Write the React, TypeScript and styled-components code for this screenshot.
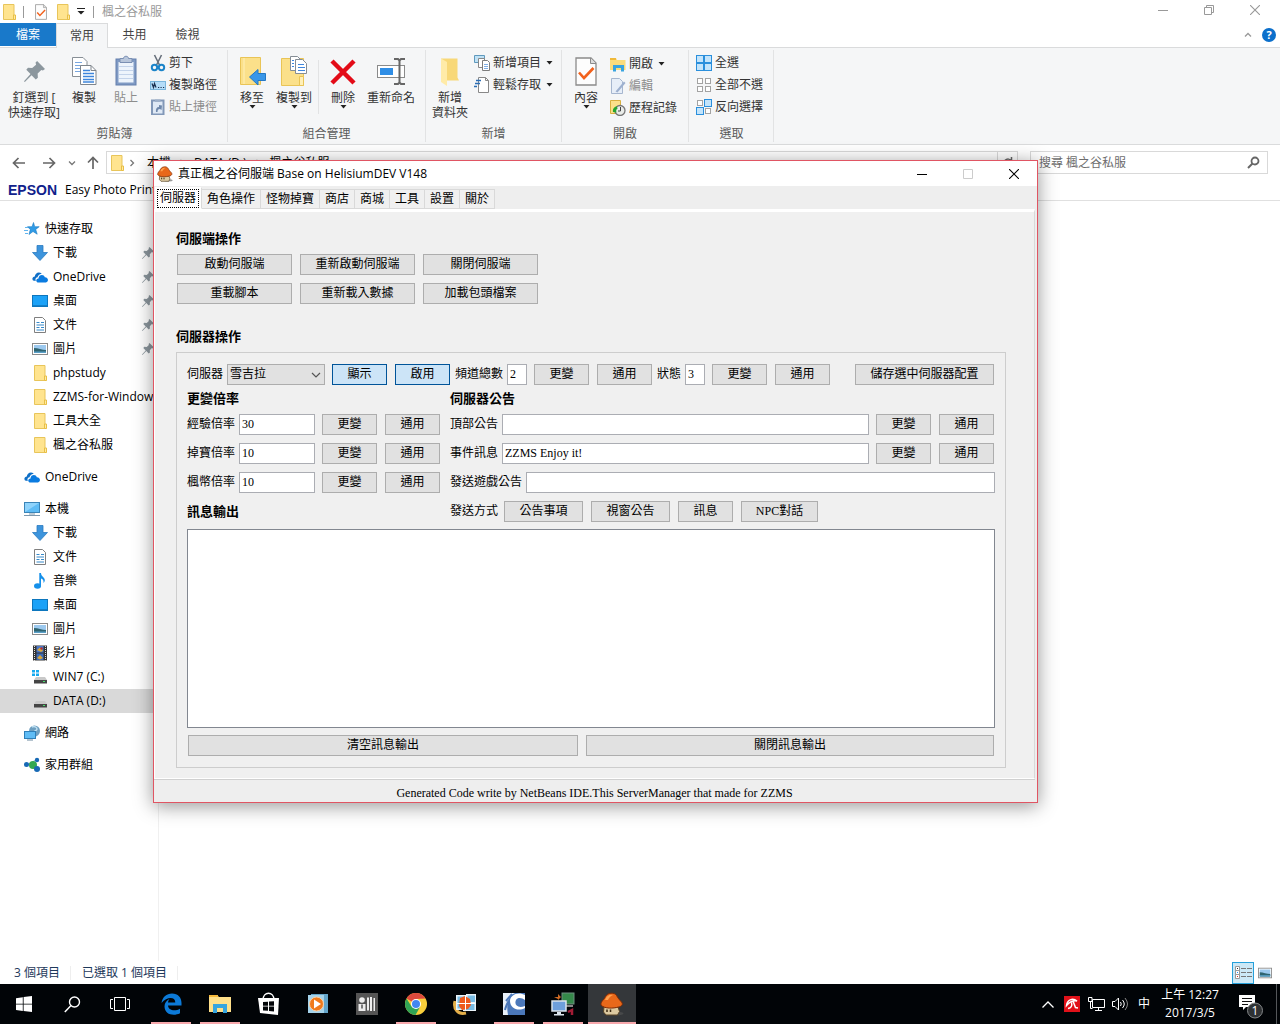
import React, { useState } from "react";
import styled, { createGlobalStyle, css } from "styled-components";

const uiFont = `"Open Sans", "Noto Sans CJK TC", sans-serif`;
const swingFont = `"Liberation Serif", "Noto Sans CJK TC", serif`;

const Global = createGlobalStyle`
  *, *::before, *::after { box-sizing: border-box; }
  body { margin: 0; background: #fff; font: 12px/16px ${uiFont}; color: #000; }
  button, input, select, textarea { font: inherit; color: inherit; margin: 0; border-radius: 0; }
  button { cursor: default; padding: 0; border: 0; background: none; white-space: nowrap; }
  a { color: inherit; text-decoration: none; }
  svg { display: block; flex: none; }
`;

/* ------------------------------------------------------------ icons */

type IconProps = { size?: number };

const Folder = ({ size = 16 }: IconProps) => (
  <svg width={size} height={size} viewBox="0 0 16 16">
    <path d="M2.5.5h10.5v11l1 .5v3.5H2.5z" fill="#ffe48f" stroke="#e8c55a" />
    <path d="M12.5 15.5v-4.500h2v4.500z" fill="#ffeaa6" stroke="#e8bf45" />
  </svg>
);

const PinIcon = ({ size = 12 }: IconProps) => (
  <svg width={size} height={size} viewBox="0 0 20 20">
    <path d="M12.500 0 20 7.500l-2 1.500-1.500-.5-3.500 3.500.2 4-2 1.500-4-4L.8 20 0 19.200l6.200-6.800-4-4 1.600-2 4 .2L11.500 3.500 11 1.500z" fill="#8c979e" />
  </svg>
);

const Caret = () => (
  <svg width="7" height="4" viewBox="0 0 7 4"><path d="M.5 0h6L3.500 3.500z" fill="#222" /></svg>
);

const CheckDoc = ({ w = 12, h = 16 }: { w?: number; h?: number }) => (
  <svg width={w} height={h} viewBox="0 0 22 29">
    <path d="M1 1h15l5 5v22H1z" fill="#fdfdfd" stroke="#8b8b8b" strokeWidth="1.300" />
    <path d="M15.500 1v5.500H21" fill="#ddd" stroke="#8b8b8b" />
    <path d="M4 15.500l5 5.500 9.500-10" fill="none" stroke="#f2611c" strokeWidth="2.600" />
  </svg>
);

const CopyIcon = () => (
  <svg width="26" height="30" viewBox="0 0 26 30">
    <path d="M1.500 1.500H12l4 4V20.500h-14.500z" fill="#fff" stroke="#888f96" />
    <path d="M4 6.500h7M4 9.500h8M4 12.500h8M4 15.500h8" stroke="#79a7e0" />
    <path d="M9.500 9.500H20l5 5V28.500H9.500z" fill="#fff" stroke="#7e858c" />
    <path d="M20 9.500v5h5" fill="none" stroke="#7e858c" />
    <path d="M12 14.500h7M12 17.500h11M12 20.500h11M12 23.500h11M12 26h11" stroke="#3f86dc" strokeWidth="1.400" />
  </svg>
);

const PasteIcon = () => (
  <svg width="22" height="32" viewBox="0 0 22 32">
    <rect x="1" y="4" width="20" height="26" fill="#7f9ac4" stroke="#647fad" />
    <rect x="3.500" y="7" width="15" height="20.500" fill="#edf4fc" />
    <path d="M4 11.500h14M4 15.500h14M4 19.500h14M4 23.500h14" stroke="#c3d3ea" />
    <path d="M5 3.500h3.500C8.500.5 13.500.5 13.500 3.500H17v4H5z" fill="#b8c6db" stroke="#7a8fb3" />
  </svg>
);

const Scissors = () => (
  <svg width="16" height="18" viewBox="0 0 16 18">
    <path d="M4.500 1 10 12M11.500 1 6 12" stroke="#67707b" strokeWidth="1.600" />
    <circle cx="4.500" cy="13.500" r="2.700" fill="none" stroke="#1b84c9" strokeWidth="2" />
    <circle cx="11.500" cy="13.500" r="2.700" fill="none" stroke="#1b84c9" strokeWidth="2" />
  </svg>
);

const PathIcon = () => (
  <svg width="16" height="16" viewBox="0 0 16 16">
    <rect x=".5" y="4.500" width="15" height="8" fill="#b5dcf8" stroke="#7ab5dc" />
    <path d="M2 6.500l1.500 4 1-4 1.500 4M8 10.500h1.200M10.500 10.500h1.200M13 10.500h1.200" fill="none" stroke="#1b3050" strokeWidth="1.200" />
  </svg>
);

const PasteLink = () => (
  <svg width="16" height="16" viewBox="0 0 16 16">
    <rect x="2" y="1.500" width="11.500" height="14" fill="#dfe9f5" stroke="#8298b8" strokeWidth="2" />
    <path d="M5 .5h5.500v2.500H5z" fill="#9eb0c9" />
    <path d="M6 13c-.5-3 .5-5 3-5V6l3 .5-.5 4.500-1.500-1c-2 0-2.500 1-2.500 3z" fill="#6f88ab" />
  </svg>
);

const MoveTo = () => (
  <svg width="28" height="30" viewBox="0 0 28 30">
    <path d="M2.500 1.500h20v27h-20z" fill="#fbe08a" stroke="#e9c456" />
    <path d="M6 2v26" stroke="#fff0b9" />
    <path d="M20 17.500h7.500v7H20V29l-8.500-8L20 13.500z" fill="#3a97e8" stroke="#2478c4" />
  </svg>
);

const CopyTo = () => (
  <svg width="28" height="32" viewBox="0 0 28 32">
    <path d="M1.500 3.500h22v27h-22z" fill="#fbe08a" stroke="#e9c456" />
    <path d="M19.500 21.500h4v9h-4z" fill="#fff0b9" stroke="#e9c456" />
    <path d="M10.500 1.500h7l3 3v11h-10z" fill="#fff" stroke="#858d95" />
    <path d="M15.500 4.500h7l4 4v10h-11z" fill="#fff" stroke="#858d95" />
    <path d="M12 5.500h2M12 8.500h2M12 11.500h2M18 9.500h6M18 12.500h7M18 15.500h7" stroke="#3f86dc" />
  </svg>
);

const DeleteIcon = () => (
  <svg width="26" height="28" viewBox="0 0 26 28">
    <path d="M2 4 24 26M24 4 2 26" stroke="#e30b17" strokeWidth="4.500" />
  </svg>
);

const RenameIcon = () => (
  <svg width="30" height="28" viewBox="0 0 30 28">
    <rect x="1.500" y="8.500" width="27" height="12" fill="#fff" stroke="#8a8a8a" />
    <rect x="4" y="11" width="13" height="7" fill="#2f8ee6" />
    <path d="M18 2h4l1.500 1.500L25 2h4M18 27h4l1.500-1.500L25 27h4M23.500 3v23" fill="none" stroke="#666" strokeWidth="2" />
  </svg>
);

const NewFolder = () => (
  <svg width="22" height="30" viewBox="0 0 22 30">
    <path d="M2 2.500h16.500v19l1.500 3H7z" fill="#f8d878" />
    <path d="M2 2.500l6 3.500v24l-6-4z" fill="#ffeba8" />
  </svg>
);

const NewItem = () => (
  <svg width="16" height="16" viewBox="0 0 16 16">
    <path d="M.5.5h10v7H.5z" fill="#bfe1f5" stroke="#5f99bd" />
    <path d="M4.500 3.500h6v9h-6z" fill="#fff" stroke="#888" />
    <path d="M8.500 5.500h5l2 2v8h-7z" fill="#fff" stroke="#7d7d7d" />
    <path d="M10 9.500h4M10 11.500h4M10 13.500h4" stroke="#80aee5" />
  </svg>
);

const EasyAccess = () => (
  <svg width="16" height="16" viewBox="0 0 16 16">
    <path d="M4.500.5h7l3 3v12h-10z" fill="#fff" stroke="#888" />
    <path d="M11.500.5v3h3" fill="none" stroke="#888" />
    <path d="M2 3.500h5M1 6.500h5M0 9.500h3" stroke="#2a6db4" strokeWidth="1.500" />
  </svg>
);

const OpenIcon = () => (
  <svg width="16" height="16" viewBox="0 0 16 16">
    <path d="M0 2h6l1 2h8.500v10H0z" fill="#fbdc7b" />
    <path d="M0 2h6v2H0z" fill="#f0b93a" />
    <path d="M3 15.500V9h11v6.500h-3v-3.500H6v3.500z" fill="#38a4e0" />
  </svg>
);

const EditIcon = () => (
  <svg width="16" height="16" viewBox="0 0 16 16">
    <path d="M1.500.5h8l3 3v12h-11z" fill="#e7eef8" stroke="#a6b6cf" />
    <path d="M5.500 13.500l8.500-10 1.500 1.500-8 9.500z" fill="#9db0cf" />
  </svg>
);

const HistoryIcon = () => (
  <svg width="16" height="16" viewBox="0 0 16 16">
    <path d="M.5.5h10v13H.5z" fill="#fbe08a" stroke="#d8b040" />
    <circle cx="10" cy="10.500" r="5" fill="#e9ece9" stroke="#777" strokeWidth="1.300" />
    <path d="M10.500 7v4h-2.500" fill="none" stroke="#444" />
    <path d="M3 12c-.5-3 1-5.500 4-5.500L7.500 9c-1.500 0-1.500 2-1 3.500z" fill="#27a52f" />
  </svg>
);

const SelectGrid = ({ on }: { on: number[] }) => (
  <svg width="16" height="16" viewBox="0 0 16 16">
    {[0, 1, 2, 3].map((i) => {
      const sel = on.includes(i);
      const o = sel ? 0.5 : 1.5;
      const s = sel ? 7 : 5;
      return (
        <rect key={i} x={(i % 2) * 8 + o} y={Math.floor(i / 2) * 8 + o} width={s} height={s}
          fill={sel ? "#c3e4fb" : "#fff"} stroke={sel ? "#2a8fdc" : "#a3a3a3"} />
      );
    })}
  </svg>
);

const StarIcon = () => (
  <svg width="16" height="16" viewBox="0 0 16 16">
    <path d="M9.500 1.500l1.200 4.200h4.500l-3.500 2.700 1.500 4.800-4.200-2.700-4 3 1.300-5L3.500 5.700h4.500z" fill="#2f9be6" stroke="#1b7ac2" strokeWidth=".6" />
    <path d="M1 6.500h3M0 9.500h4M1 12.500h3" stroke="#62b5ee" />
  </svg>
);
const DownIcon = () => (
  <svg width="16" height="16" viewBox="0 0 16 16"><path d="M5 .5h6v7h4.500L8 15.500.5 7.500H5z" fill="#3d94dc" stroke="#2b7bc0" strokeWidth=".8" /></svg>
);
const CloudIcon = () => (
  <svg width="16" height="16" viewBox="0 0 16 16">
    <path d="M1 11.500C-.5 9.500 1 7.500 2.800 7.500 3 4 7 2 9.800 4.700c-3 .3-4 2.300-4.200 3.600-2 .2-2.600 2-1.800 3.700z" fill="#0f6fc6" />
    <path d="M5.500 13.500c-2-1-1.500-4 1-4 0-4 5.500-4.500 6.300-1.300C16.500 8 17 13 14 13.500z" fill="#0a7be0" />
  </svg>
);
const DesktopIcon = () => (
  <svg width="16" height="16" viewBox="0 0 16 16">
    <rect x=".5" y="2.500" width="15" height="11" fill="#1ca2f7" stroke="#0d76bd" />
    <path d="M1.500 12.500h13" stroke="#0a5e98" strokeDasharray="1 1" />
  </svg>
);
const DocIcon = () => (
  <svg width="16" height="16" viewBox="0 0 16 16">
    <path d="M2.500.5h8l3 3v12h-11z" fill="#fff" stroke="#7f7f7f" />
    <path d="M4.500 5.500h3M9 5.500h3M4.500 8h7.500M4.500 10.500h3M4.500 13h7.500M9 10.500h3" stroke="#3689c9" />
  </svg>
);
const PictureIcon = ({ size = 16 }: IconProps) => (
  <svg width={size} height={size} viewBox="0 0 16 16">
    <rect x=".5" y="2.500" width="15" height="11" fill="#fff" stroke="#8a8a8a" />
    <rect x="2" y="4" width="12" height="8" fill="#9cc9ef" />
    <path d="M2 7c4 0 8 2 12 2v3H2z" fill="#2f6470" />
    <path d="M2 10.500h12V12H2z" fill="#5aa0c8" />
  </svg>
);
const PcIcon = () => (
  <svg width="16" height="16" viewBox="0 0 16 16">
    <rect x=".5" y="1.500" width="15" height="10" fill="#5fbcf5" stroke="#3a84b7" />
    <path d="M1 2h14L1 11z" fill="#8fd3fb" />
    <path d="M5 13h6M0 14.500h16" stroke="#7d98ad" />
  </svg>
);
const MusicIcon = () => (
  <svg width="16" height="16" viewBox="0 0 16 16">
    <ellipse cx="5.500" cy="13" rx="3.500" ry="2.700" fill="#1590ea" />
    <path d="M7.300 0H9c0 3.500 3.800 4 3.800 7 0 1-.3 2-1.300 3 .4-3-1-4-2.500-4.500v8H7.300z" fill="#1590ea" />
  </svg>
);
const VideoIcon = () => (
  <svg width="16" height="16" viewBox="0 0 16 16">
    <rect x="1" y=".5" width="14" height="15" fill="#333" />
    <path d="M2.500 1v15M13.500 1v15" stroke="#ddd" strokeDasharray="1 1" />
    <rect x="4.500" y="1" width="7" height="6.500" fill="#4a77c7" />
    <rect x="4.500" y="8.500" width="7" height="6.500" fill="#3c6bb8" />
    <path d="M5 5l3-2.500 3 3-2 1.500zM5 13l3-3 3 3-3 1.500z" fill="#d9a63a" />
    <circle cx="9.500" cy="3.500" r="1.200" fill="#b92f2f" />
  </svg>
);
const DriveIcon = ({ win }: { win?: boolean }) => (
  <svg width="16" height="16" viewBox="0 0 16 16">
    {win && <path d="M0 1h3v2.500H0zM4 1h3v2.500H4zM0 4.500h3V7H0zM4 4.500h3V7H4z" fill="#16a9ef" />}
    <path d="M4 8h9l2 3H2z" fill="#c9c9c9" />
    <path d="M2 11h13v3.500H2z" fill="#454545" />
    <path d="M11 12.500h2" stroke="#47e06b" />
  </svg>
);
const NetworkIcon = () => (
  <svg width="16" height="16" viewBox="0 0 16 16">
    <circle cx="10.500" cy="6" r="5.500" fill="#6e9fc0" />
    <path d="M8 2c2-1 5 0 5 2s-3 1.500-3 3.500" fill="none" stroke="#bfe0f2" strokeWidth="1.500" />
    <rect x=".5" y="6.500" width="11" height="7" fill="#5fbcf5" stroke="#2f7fb8" />
    <path d="M3 15h6" stroke="#6c8aa0" />
  </svg>
);
const HomeGroup = () => (
  <svg width="16" height="16" viewBox="0 0 16 16">
    <path d="M2.500 8 12 3M10 8l3 4" stroke="#7ba8c9" />
    <circle cx="2.500" cy="7.500" r="2.500" fill="#1769b5" />
    <circle cx="9" cy="8" r="4" fill="#32a852" />
    <circle cx="13" cy="3" r="2.200" fill="#1769b5" />
    <circle cx="13" cy="12" r="3" fill="#1769b5" />
  </svg>
);

const Mushroom = ({ size = 16 }: IconProps) => (
  <svg width={size} height={size} viewBox="0 0 24 24">
    <ellipse cx="17" cy="21.500" rx="6.500" ry="1.800" fill="#555" opacity=".6" />
    <path d="M4 15h14l1.500 4.500-2 3.500H6l-2.500-3z" fill="#dcc9a0" stroke="#5b4526" />
    <path d="M1 13C.5 9.500 4 8 5.500 4.500 7.500.5 14.500 0 16.500 3.500c1.500 2.500 2.500 4 5 6.500 2 2.500 0 4.500-3 5-5 1.500-14 2-17.500-2z" fill="#e8681a" stroke="#7d2b06" />
    <path d="M5 8c1-4 5-6 8-5-3 1-4 3-5 5z" fill="#ffa14e" />
    <path d="M7 17.500v2.500M10.500 17.500v2.500" stroke="#3a2810" strokeWidth="1.500" />
  </svg>
);

const MinGlyph = () => <svg width="10" height="10" viewBox="0 0 10 10"><path d="M0 5.500h10" stroke="currentColor" /></svg>;
const MaxGlyph = () => <svg width="10" height="10" viewBox="0 0 10 10"><path d="M.5.5h9v9h-9z" fill="none" stroke="currentColor" /></svg>;
const RestoreGlyph = () => (
  <svg width="10" height="10" viewBox="0 0 10 10"><path d="M.5 2.500h7v7h-7zM2.500 2.500v-2h7v7h-2" fill="none" stroke="currentColor" /></svg>
);
const CloseGlyph = () => <svg width="10" height="10" viewBox="0 0 10 10"><path d="M0 0 10 10M10 0 0 10" stroke="currentColor" strokeWidth="1.100" /></svg>;

const Arrow = ({ turn = 0 }: { turn?: number }) => (
  <svg width="14" height="14" viewBox="0 0 14 14">
    <path transform={`rotate(${turn} 7 7)`} d="M13 7H1.500M6.500 2 1.500 7l5 5" fill="none" stroke="#666" strokeWidth="1.700" />
  </svg>
);
const Chevron = ({ turn = 0, color = "#777" }: { turn?: number; color?: string }) => (
  <svg width="8" height="8" viewBox="0 0 8 8">
    <path transform={`rotate(${turn} 4 4)`} d="M1 2.500 4 5.500l3-3" fill="none" stroke={color} strokeWidth="1.300" />
  </svg>
);

/* --------------------------------------------------------- explorer */

const Desktop = styled.div`
  position: relative; display: flex; flex-direction: column; min-height: 100vh; overflow: hidden;
`;
const Explorer = styled.div`flex: 1; display: flex; flex-direction: column;`;
const TitleBar = styled.header`display: flex; align-items: center; height: 23px; padding: 0 2px 0 1px; color: #999;`;
const QuickBtn = styled.button<{ $w: number }>`display: grid; place-items: center; width: ${(p) => p.$w}px; height: 20px;`;
const Bar = styled.span`width: 1px; height: 12px; background: #999; margin: 0 8px 0 7px;`;
const WindowButtons = styled.div`display: flex; align-self: flex-start; margin-left: auto; height: 20px;`;
const WindowBtn = styled.button<{ $color: string }>`
  display: grid; place-items: center; width: 46px; color: ${(p) => p.$color};
`;

const Tabs = styled.div`display: flex; align-items: stretch; height: 25px; border-bottom: 1px solid #dadbdc;`;
const RibbonTab = styled.button<{ $kind?: "file" | "active" }>`
  width: 53px; color: #444;
  ${(p) => p.$kind === "file" && css`width: 56px; background: #1979ca; color: #fff; height: 23px;`}
  ${(p) => p.$kind === "active" && css`
    background: #f5f6f7; border: 1px solid #dadbdc; border-bottom: 0; margin-bottom: -1px; width: 52px;
  `}
`;
const TabTools = styled.div`display: flex; align-items: center; gap: 10px; margin-left: auto; padding-right: 4px;`;
const Help = styled.button`
  width: 14px; height: 14px; border-radius: 50%; background: #0b6fcb; color: #fff; font-weight: 700; font-size: 11px; line-height: 14px;
`;

const Ribbon = styled.div`display: flex; height: 97px; background: #f5f6f7; border-bottom: 1px solid #dadbdc; padding: 2px 0;`;
const RibbonGroup = styled.section<{ $w: number; $pad?: number }>`
  display: flex; flex-direction: column; width: ${(p) => p.$w}px; padding: 0 6px 0 ${(p) => p.$pad ?? 6}px;
  border-right: 1px solid #e2e3e4;
`;
const GroupBody = styled.div`display: flex; flex: 1; gap: 6px; padding-top: 5px;`;
const GroupName = styled.div`text-align: center; color: #5a5a5a;`;
const BigBtn = styled.button<{ $w?: number; $off?: boolean }>`
  display: flex; flex-direction: column; align-items: center; width: ${(p) => p.$w ?? 36}px;
  line-height: 15px; color: ${(p) => (p.$off ? "#8d8d8d" : "#333")};
`;
const BigIcon = styled.span`display: grid; place-items: center; height: 35px; padding-bottom: 3px;`;
const InnerRule = styled.span`width: 1px; background: #e2e3e4; margin-top: 5px; height: 54px;`;
const SmallCol = styled.div<{ $low?: boolean }>`display: flex; flex-direction: column; margin-top: ${(p) => (p.$low ? -2 : -3)}px;`;
const SmallBtn = styled.button<{ $off?: boolean }>`
  display: flex; align-items: center; gap: 3px; height: 22px; color: ${(p) => (p.$off ? "#8d8d8d" : "#333")};
  & > svg:last-child:not(:first-child) { margin-left: 2px; }
`;

const AddressRow = styled.div`display: flex; align-items: center; height: 35px; padding: 0 12px 0 4px;`;
const NavBtn = styled.button<{ $w: number }>`display: grid; place-items: center; width: ${(p) => p.$w}px; height: 22px;`;
const AddressBox = styled.div`
  display: flex; flex: 1; align-items: center; height: 23px; border: 1px solid #d9d9d9; margin-right: 12px; padding-left: 2px;
`;
const Crumb = styled.a`margin-right: 7px;`;
const CrumbArrow = styled.span`display: flex; margin-right: 8px;`;
const AddressEnd = styled.button`
  display: grid; place-items: center; width: 20px; height: 21px; margin-left: auto; border-left: 1px solid #d9d9d9;
`;
const SearchBox = styled.label`
  display: flex; align-items: center; width: 238px; height: 23px; border: 1px solid #d9d9d9; padding: 0 7px 0 8px;
  input { flex: 1; min-width: 0; border: 0; padding: 0; outline: 0; background: none; }
  input::placeholder { color: #6d6d6d; opacity: 1; }
`;
const EpsonBar = styled.div`display: flex; align-items: center; gap: 8px; height: 21px; padding-left: 8px; border-bottom: 1px solid #e0e0e0;`;
const EpsonLogo = styled.span`font: 700 14px/16px "Liberation Sans", sans-serif; color: #10218b;`;

const Body = styled.div`display: flex; flex: 1;`;
const Nav = styled.nav`
  display: flex; flex-direction: column; gap: 8px; width: 159px; padding-top: 16px; border-right: 1px solid #f0f0f0;
`;
const NavLink = styled.a<{ $deep?: boolean; $on?: boolean }>`
  display: flex; align-items: center; gap: 5px; height: 24px; white-space: nowrap;
  padding: 0 4px 0 ${(p) => (p.$deep ? 32 : 24)}px; background: ${(p) => (p.$on ? "#d9d9d9" : "none")};
`;
const PinSlot = styled.span`margin-left: auto;`;
const StatusBar = styled.footer`display: flex; align-items: center; height: 23px; padding-left: 14px; color: #1e395b;`;
const StatusItem = styled.span`padding-right: 10px; margin-right: 11px; border-right: 1px solid #eee; line-height: 14px;`;
const ViewBtn = styled.button<{ $on?: boolean }>`
  display: grid; place-items: center; width: 22px; height: 22px;
  ${(p) => p.$on && css`background: #cce8f6; border: 1px solid #26a0da;`}
`;
const Views = styled.div`display: flex; margin-left: auto; padding-right: 4px;`;

/* ---------------------------------------------------- server window */

const Dialog = styled.div`
  position: absolute; left: 153px; top: 160px; width: 885px; background: #eee; border: 1px solid #e05563;
  box-shadow: 0 3px 18px rgba(0, 0, 0, 0.42);
`;
const DialogTitle = styled.div`display: flex; align-items: center; height: 25px; background: #fff; padding-left: 3px; gap: 5px;`;
const DialogButtons = styled.div`display: flex; align-self: stretch; margin-left: auto;`;
const SwingArea = styled.div`font: 12px/16px ${swingFont};`;
const SwingTabs = styled.div`display: flex; align-items: flex-end; height: 23px; padding-left: 1px;`;
const SwingTab = styled.button<{ $on: boolean }>`
  height: 20px; padding: 0 5px; background: #f0f0f0; border: 1px solid #d9d9d9; border-left: 0;
  ${(p) => p.$on && css`
    height: 22px; padding: 0 2px; background: #fff; border-color: #fff #d9d9d9 #fff #fff;
    span { display: block; border: 1px dotted #000; padding: 0 2px; line-height: 17px; }
  `}
`;
const Panel = styled.div`
  margin-right: 2px; padding: 20px 28px 10px 21px; background: #f0f0f0;
  border: 1px solid #fff; border-top-width: 3px; border-right-color: #d9d9d9; box-shadow: 0 1px 0 #d0d0d0;
`;
const Heading = styled.h2<{ $gap?: number }>`
  margin: 0 0 ${(p) => p.$gap ?? 0}px; font-size: 13px; line-height: 14px; font-weight: 700;
`;
const ActionGrid = styled.div`display: grid; grid-template-columns: repeat(3, 115px); gap: 8px; padding-left: 1px; margin-bottom: 26px;`;
const Btn = styled.button<{ $w?: number; $hot?: boolean }>`
  height: 21px; width: ${(p) => (p.$w ? `${p.$w}px` : "auto")}; flex: none; padding-bottom: 1px;
  background: ${(p) => (p.$hot ? "#cce4f7" : "#e1e1e1")}; border: 1px solid ${(p) => (p.$hot ? "#005499" : "#adadad")};
`;
const Box = styled.div`border: 1px solid #cdcdcd; padding: 11px 10px;`;
const Line = styled.div<{ $end?: boolean }>`display: flex; align-items: center; height: 21px; padding-right: ${(p) => (p.$end ? 1 : 0)}px;`;
const Label = styled.label`flex: none; margin-right: 4px; padding-bottom: 2px;`;
const Field = styled.input<{ $w?: number }>`
  height: 21px; border: 1px solid #abadb3; background: #fff; padding: 0 2px; outline: 0; min-width: 0;
  ${(p) => (p.$w ? css`width: ${p.$w}px; flex: none;` : css`flex: 1;`)}
`;
const Pair = styled.div`display: flex; flex: none; gap: 8px; margin: 0 5px 0 7px; &:last-child { margin-right: 0; }`;
const SelectWrap = styled.div`
  display: grid; width: 98px; align-items: center;
  & > * { grid-area: 1 / 1; }
  svg { justify-self: end; margin-right: 4px; pointer-events: none; }
`;
const Select = styled.select`
  appearance: none; height: 21px; width: 100%; padding: 0 2px 2px; background: #e1e1e1; border: 1px solid #adadad; outline: 0;
`;
const Save = styled.div`margin-left: auto;`;
const Columns = styled.div`display: grid; grid-template-columns: 253px 1fr; gap: 10px; margin: 7px 0;`;
const Column = styled.div`display: flex; flex-direction: column; gap: 8px;`;
const Sends = styled.div`display: flex; gap: 8px; padding-left: 2px;`;
const Output = styled.textarea`
  display: block; width: 100%; height: 199px; resize: none; border: 1px solid #828790; background: #fff; outline: 0; padding: 2px;
`;
const OutputBtns = styled.div`display: grid; grid-template-columns: 390fr 408fr; gap: 8px; padding: 7px 1px 0;`;
const Credit = styled.div`padding: 6px 2px 0 0; height: 23px; text-align: center;`;

/* ---------------------------------------------------------- taskbar */

const Taskbar = styled.div`display: flex; height: 40px; background: #010407; color: #fff;`;
const SysBtn = styled.button`display: grid; place-items: center; width: 48px;`;
const Apps = styled.div`display: flex; margin-left: 3px; gap: 1px;`;
const TaskApp = styled.button<{ $run?: boolean; $on?: boolean }>`
  display: grid; place-items: center; width: 48px; padding-top: 2px; border-bottom: 2px solid transparent;
  background: linear-gradient(${(p) => (p.$run || p.$on ? "#f7a8ac, #f7a8ac" : "transparent, transparent")}) bottom / ${(p) => (p.$on ? "48px" : "40px")} 2px no-repeat border-box;
  ${(p) => p.$on && css`background-color: #34373a;`}
`;
const Tray = styled.div`display: flex; align-items: center; margin-left: auto;`;
const TrayBtn = styled.button`display: grid; place-items: center; width: 24px; height: 40px;`;
const Clock = styled.button`width: 68px; line-height: 18px; font-size: 12px; white-space: normal;`;
const Action = styled.button`display: grid; place-items: center; width: 52px; height: 40px; padding: 4px 0 0 2px;`;
const Edge = styled.span`width: 1px; height: 40px; background: #54575a; margin-right: 3px;`;

type Item = { n: string; i: React.ReactNode; pin?: boolean; on?: boolean };

const quick: Item[] = [
  { n: "下載", i: <DownIcon />, pin: true },
  { n: "OneDrive", i: <CloudIcon />, pin: true },
  { n: "桌面", i: <DesktopIcon />, pin: true },
  { n: "文件", i: <DocIcon />, pin: true },
  { n: "圖片", i: <PictureIcon />, pin: true },
  { n: "phpstudy", i: <Folder /> },
  { n: "ZZMS-for-Windows", i: <Folder /> },
  { n: "工具大全", i: <Folder /> },
  { n: "楓之谷私服", i: <Folder /> },
];
const computer: Item[] = [
  { n: "下載", i: <DownIcon /> },
  { n: "文件", i: <DocIcon /> },
  { n: "音樂", i: <MusicIcon /> },
  { n: "桌面", i: <DesktopIcon /> },
  { n: "圖片", i: <PictureIcon /> },
  { n: "影片", i: <VideoIcon /> },
  { n: "WIN7 (C:)", i: <DriveIcon win /> },
  { n: "DATA (D:)", i: <DriveIcon />, on: true },
];

const NavSection = ({ head, items = [] }: { head: Item; items?: Item[] }) => (
  <div>
    <NavLink href="#">{head.i}{head.n}</NavLink>
    {items.map((it) => (
      <NavLink href="#" key={it.n} $deep $on={it.on}>
        {it.i}{it.n}{it.pin && <PinSlot><PinIcon /></PinSlot>}
      </NavLink>
    ))}
  </div>
);

const Big = ({ icon, children, w, off, drop }: { icon: React.ReactNode; children: React.ReactNode; w?: number; off?: boolean; drop?: boolean }) => (
  <BigBtn $w={w} $off={off}><BigIcon>{icon}</BigIcon><span>{children}</span>{drop && <Caret />}</BigBtn>
);

const ExplorerWindow = () => (
  <Explorer>
    <TitleBar>
      <QuickBtn $w={15} aria-label="資料夾"><Folder /></QuickBtn>
      <Bar />
      <QuickBtn $w={18} aria-label="內容"><CheckDoc /></QuickBtn>
      <QuickBtn $w={26} aria-label="新增資料夾"><Folder /></QuickBtn>
      <QuickBtn $w={10} aria-label="自訂">
        <svg width="8" height="7" viewBox="0 0 8 7"><path d="M0 .5h8" stroke="#222" /><path d="M.5 3h7L4 6.500z" fill="#222" /></svg>
      </QuickBtn>
      <Bar />
      楓之谷私服
      <WindowButtons>
        <WindowBtn $color="#999" aria-label="最小化"><MinGlyph /></WindowBtn>
        <WindowBtn $color="#999" aria-label="還原"><RestoreGlyph /></WindowBtn>
        <WindowBtn $color="#999" aria-label="關閉"><CloseGlyph /></WindowBtn>
      </WindowButtons>
    </TitleBar>
    <Tabs>
      <RibbonTab $kind="file">檔案</RibbonTab>
      <RibbonTab $kind="active">常用</RibbonTab>
      <RibbonTab>共用</RibbonTab>
      <RibbonTab>檢視</RibbonTab>
      <TabTools><Chevron turn={180} color="#999" /><Help>?</Help></TabTools>
    </Tabs>
    <Ribbon>
      <RibbonGroup $w={228} $pad={8}>
        <GroupBody>
          <Big w={52} icon={<PinIcon size={21} />}>釘選到 [<br />快速存取]</Big>
          <Big icon={<CopyIcon />}>複製</Big>
          <Big icon={<PasteIcon />} off>貼上</Big>
          <SmallCol>
            <SmallBtn><Scissors />剪下</SmallBtn>
            <SmallBtn><PathIcon />複製路徑</SmallBtn>
            <SmallBtn $off><PasteLink />貼上捷徑</SmallBtn>
          </SmallCol>
        </GroupBody>
        <GroupName>剪貼簿</GroupName>
      </RibbonGroup>
      <RibbonGroup $w={198}>
        <GroupBody>
          <Big icon={<MoveTo />} drop>移至</Big>
          <Big icon={<CopyTo />} drop>複製到</Big>
          <InnerRule />
          <Big icon={<DeleteIcon />} drop>刪除</Big>
          <Big w={48} icon={<RenameIcon />}>重新命名</Big>
        </GroupBody>
        <GroupName>組合管理</GroupName>
      </RibbonGroup>
      <RibbonGroup $w={136}>
        <GroupBody>
          <Big icon={<NewFolder />}>新增<br />資料夾</Big>
          <SmallCol>
            <SmallBtn><NewItem />新增項目<Caret /></SmallBtn>
            <SmallBtn><EasyAccess />輕鬆存取<Caret /></SmallBtn>
          </SmallCol>
        </GroupBody>
        <GroupName>新增</GroupName>
      </RibbonGroup>
      <RibbonGroup $w={127}>
        <GroupBody>
          <Big icon={<CheckDoc w={22} h={29} />} drop>內容</Big>
          <SmallCol $low>
            <SmallBtn><OpenIcon />開啟<Caret /></SmallBtn>
            <SmallBtn $off><EditIcon />編輯</SmallBtn>
            <SmallBtn><HistoryIcon />歷程記錄</SmallBtn>
          </SmallCol>
        </GroupBody>
        <GroupName>開啟</GroupName>
      </RibbonGroup>
      <RibbonGroup $w={85} $pad={7}>
        <GroupBody>
          <SmallCol>
            <SmallBtn><SelectGrid on={[0, 1, 2, 3]} />全選</SmallBtn>
            <SmallBtn><SelectGrid on={[]} />全部不選</SmallBtn>
            <SmallBtn><SelectGrid on={[1, 2]} />反向選擇</SmallBtn>
          </SmallCol>
        </GroupBody>
        <GroupName>選取</GroupName>
      </RibbonGroup>
    </Ribbon>
    <AddressRow>
      <NavBtn $w={30} aria-label="上一頁"><Arrow /></NavBtn>
      <NavBtn $w={30} aria-label="下一頁"><Arrow turn={180} /></NavBtn>
      <NavBtn $w={16} aria-label="最近位置"><Chevron /></NavBtn>
      <NavBtn $w={26} aria-label="上移"><Arrow turn={90} /></NavBtn>
      <AddressBox>
        <Folder />
        <CrumbArrow><NavBtn $w={14} aria-label="展開"><Chevron turn={-90} /></NavBtn></CrumbArrow>
        <Crumb href="#">本機</Crumb><CrumbArrow><Chevron turn={-90} /></CrumbArrow>
        <Crumb href="#">DATA (D:)</Crumb><CrumbArrow><Chevron turn={-90} /></CrumbArrow>
        <Crumb href="#">楓之谷私服</Crumb>
        <AddressEnd aria-label="重新整理">
          <svg width="10" height="12" viewBox="0 0 10 12"><path d="M8.500 4A4 4 0 1 0 9 7M8.500 0v4h-4" fill="none" stroke="#666" strokeWidth="1.500" /></svg>
        </AddressEnd>
      </AddressBox>
      <SearchBox>
        <input type="text" placeholder="搜尋 楓之谷私服" aria-label="搜尋" />
        <svg width="13" height="13" viewBox="0 0 13 13"><circle cx="8" cy="5" r="3.500" fill="none" stroke="#666" strokeWidth="1.800" /><path d="M5.500 7.500 1 12" stroke="#666" strokeWidth="2" /></svg>
      </SearchBox>
    </AddressRow>
    <EpsonBar><EpsonLogo>EPSON</EpsonLogo><span>Easy Photo Print</span></EpsonBar>
    <Body>
      <Nav>
        <NavSection head={{ n: "快速存取", i: <StarIcon /> }} items={quick} />
        <NavSection head={{ n: "OneDrive", i: <CloudIcon /> }} />
        <NavSection head={{ n: "本機", i: <PcIcon /> }} items={computer} />
        <NavSection head={{ n: "網路", i: <NetworkIcon /> }} />
        <NavSection head={{ n: "家用群組", i: <HomeGroup /> }} />
      </Nav>
    </Body>
    <StatusBar>
      <StatusItem>3 個項目</StatusItem>
      <StatusItem>已選取 1 個項目</StatusItem>
      <Views>
        <ViewBtn $on aria-label="詳細資料">
          <svg width="17" height="14" viewBox="0 0 17 14">
            <path d="M.5.5h4v4h-4zM.5 4.500h4v4h-4zM.5 8.500h4v4h-4z" fill="#fff" stroke="#999" />
            <path d="M2 2.500h1" stroke="#333" /><path d="M2 6.500h1" stroke="#1e90ff" /><path d="M2 10.500h1" stroke="#d33" />
            <path d="M6 2.500h5M12 2.500h5M6 6.500h5M12 6.500h5M6 10.500h5M12 10.500h5" stroke="#777" />
          </svg>
        </ViewBtn>
        <ViewBtn aria-label="大圖示"><PictureIcon size={14} /></ViewBtn>
      </Views>
    </StatusBar>
  </Explorer>
);

const tabNames = ["伺服器", "角色操作", "怪物掉寶", "商店", "商城", "工具", "設置", "關於"];
const rates = [
  { id: "exp", label: "經驗倍率", value: "30" },
  { id: "drop", label: "掉寶倍率", value: "10" },
  { id: "meso", label: "楓幣倍率", value: "10" },
];

const Apply = () => <Pair><Btn $w={55}>更變</Btn><Btn $w={55}>通用</Btn></Pair>;

const ServerWindow = () => {
  const [tab, setTab] = useState(0);
  return (
    <Dialog role="dialog" aria-label="伺服端">
      <DialogTitle>
        <Mushroom />
        <span>真正楓之谷伺服端 Base on HelisiumDEV V148</span>
        <DialogButtons>
          <WindowBtn $color="#000" aria-label="最小化"><MinGlyph /></WindowBtn>
          <WindowBtn $color="#ccc" aria-label="最大化" disabled><MaxGlyph /></WindowBtn>
          <WindowBtn $color="#000" aria-label="關閉"><CloseGlyph /></WindowBtn>
        </DialogButtons>
      </DialogTitle>
      <SwingArea>
        <SwingTabs role="tablist">
          {tabNames.map((t, i) => (
            <SwingTab key={t} role="tab" aria-selected={tab === i} $on={tab === i} onClick={() => setTab(i)}><span>{t}</span></SwingTab>
          ))}
        </SwingTabs>
        <Panel>
          <Heading $gap={8}>伺服端操作</Heading>
          <ActionGrid>
            {["啟動伺服端", "重新啟動伺服端", "關閉伺服端", "重載腳本", "重新載入數據", "加載包頭檔案"].map((t) => <Btn key={t}>{t}</Btn>)}
          </ActionGrid>
          <Heading $gap={8}>伺服器操作</Heading>
          <Box>
            <Line $end>
              <Label htmlFor="server">伺服器</Label>
              <SelectWrap>
                <Select id="server" defaultValue="雪吉拉"><option>雪吉拉</option></Select>
                <svg width="10" height="8" viewBox="0 0 10 8"><path d="M1 2l4 4 4-4" fill="none" stroke="#555" strokeWidth="1.200" /></svg>
              </SelectWrap>
              <Pair><Btn $w={55} $hot>顯示</Btn><Btn $w={55} $hot>啟用</Btn></Pair>
              <Label htmlFor="channels">頻道總數</Label>
              <Field id="channels" $w={20} defaultValue="2" />
              <Apply />
              <Label htmlFor="state">狀態</Label>
              <Field id="state" $w={20} defaultValue="3" />
              <Apply />
              <Save><Btn $w={139}>儲存選中伺服器配置</Btn></Save>
            </Line>
            <Columns>
              <Column>
                <Heading>更變倍率</Heading>
                {rates.map((r) => (
                  <Line key={r.id}>
                    <Label htmlFor={r.id}>{r.label}</Label>
                    <Field id={r.id} $w={76} defaultValue={r.value} />
                    <Apply />
                  </Line>
                ))}
                <Line><Heading>訊息輸出</Heading></Line>
              </Column>
              <Column>
                <Heading>伺服器公告</Heading>
                <Line $end><Label htmlFor="top">頂部公告</Label><Field id="top" /><Apply /></Line>
                <Line $end><Label htmlFor="event">事件訊息</Label><Field id="event" defaultValue="ZZMS Enjoy it!" /><Apply /></Line>
                <Line><Label htmlFor="notice">發送遊戲公告</Label><Field id="notice" /></Line>
                <Line>
                  <Label as="span">發送方式</Label>
                  <Sends><Btn $w={79}>公告事項</Btn><Btn $w={79}>視窗公告</Btn><Btn $w={55}>訊息</Btn><Btn $w={77}>NPC對話</Btn></Sends>
                </Line>
              </Column>
            </Columns>
            <Output aria-label="訊息輸出" />
            <OutputBtns><Btn>清空訊息輸出</Btn><Btn>關閉訊息輸出</Btn></OutputBtns>
          </Box>
        </Panel>
        <Credit>Generated Code write by NetBeans IDE.This ServerManager that made for ZZMS</Credit>
      </SwingArea>
    </Dialog>
  );
};

const TaskbarView = () => (
  <Taskbar>
    <SysBtn aria-label="開始">
      <svg width="16" height="16" viewBox="0 0 16 16"><path d="M0 2.200 6.800 1.200v6.500H0zM7.600 1.100 16 0v7.700H7.600zM0 8.400h6.800v6.500L0 13.900zM7.600 8.400H16V16l-8.400-1.100z" fill="#fff" /></svg>
    </SysBtn>
    <SysBtn aria-label="搜尋">
      <svg width="17" height="17" viewBox="0 0 17 17"><circle cx="10.500" cy="6" r="5" fill="none" stroke="#fff" strokeWidth="1.400" /><path d="M7 9.500.8 16" stroke="#fff" strokeWidth="1.500" /></svg>
    </SysBtn>
    <SysBtn aria-label="工作檢視">
      <svg width="20" height="14" viewBox="0 0 20 14"><path d="M4.500.5h11v13h-11zM3 2.500H.5v9H3M17 2.500h2.500v9H17" fill="none" stroke="#fff" /></svg>
    </SysBtn>
    <Apps>
      <TaskApp $run aria-label="Edge">
        <svg width="21" height="22" viewBox="0 0 21 22"><path d="M.5 10C1.500 4 5.500.5 11 .5c6 0 9.500 4 9.500 9.500v2.500H7c.3 5 7 6 12 3.200v4.500c-6 3-15.500 1.800-15.500-7C3.500 10 5.500 7.500 8.500 6 7.500 7.300 7.200 8.500 7 9.500h7.300C14.300 3.500 6 3.500.5 10z" fill="#0c7ad8" /></svg>
      </TaskApp>
      <TaskApp $run aria-label="檔案總管">
        <svg width="22" height="20" viewBox="0 0 22 20"><path d="M0 2h9l1 1h12v15H0z" fill="#ffe08a" /><path d="M0 1h9v2H0z" fill="#f5b93c" /><path d="M4 19v-9h14v9h-4v-5H8v5z" fill="#36a5df" /></svg>
      </TaskApp>
      <TaskApp aria-label="市集">
        <svg width="22" height="24" viewBox="0 0 22 24"><path d="M0 6h21l-1 17L2 21z" fill="#fff" /><path d="M5 8C5-1 16-1 16 8" fill="none" stroke="#fff" strokeWidth="1.500" /><path d="M5 10l5-.3v4H5zM11 9.600l5-.4v4.500h-5zM5 14.600h5v4.200l-5-.4zM11 14.600h5v4.800l-5-.5z" fill="#05070a" /></svg>
      </TaskApp>
      <TaskApp aria-label="媒體播放器">
        <svg width="21" height="20" viewBox="0 0 21 20"><rect x="3" y="0" width="17" height="19" fill="#64a5c9" /><rect x="0" y="1" width="16" height="18" fill="#a5d3ea" /><circle cx="8.500" cy="10" r="7" fill="#f07a1c" stroke="#fbd2a9" /><path d="M6 5.500l7 4.500-7 4.500z" fill="#fff" /></svg>
      </TaskApp>
      <TaskApp aria-label="媒體庫">
        <svg width="22" height="22" viewBox="0 0 22 22"><rect width="22" height="22" fill="#555" /><circle cx="6" cy="7" r="2.800" fill="#eee" /><path d="M2.500 18v-7h7v7zM11 4.500h2v13h-2zM14 4h2v14h-2zM17.500 5h1.500v13h-1.500z" fill="#eee" /><path d="M6 11.500v4" stroke="#555" strokeWidth="1.500" /></svg>
      </TaskApp>
      <TaskApp $run aria-label="Chrome">
        <svg width="22" height="22" viewBox="0 0 22 22">
          <circle cx="11" cy="11" r="11" fill="#f9cf3b" />
          <path d="M11 11 1.500 5.500A11 11 0 0 1 20.600 5.600L11 6z" fill="#dc4a3d" />
          <path d="M1.500 5.500A11 11 0 0 0 10.500 22L15 14l-8.500-.5z" fill="#30a455" />
          <circle cx="11" cy="11" r="5" fill="#fff" /><circle cx="11" cy="11" r="4" fill="#4287f0" />
        </svg>
      </TaskApp>
      <TaskApp aria-label="相片">
        <svg width="24" height="22" viewBox="0 0 24 22"><path d="M2 8c-2 8 3 14 11 12" fill="none" stroke="#e5b04a" strokeWidth="3" /><path d="M3 2h10v15H3zM13 1h10v9H13zM10 10h13v8H10z" fill="#eaf3f8" /><path d="M4.500 3.500H12V15.500H4.500zM14.500 2.500H22V9h-7.500zM11.500 11h10V17h-10z" fill="#79bde5" /><path d="M7 5l5-2 5 3 1 6-3 4-6 1-3-4z" fill="#ee5a1c" /><path d="M12.500 2v15M4 10.500h18" stroke="#fff" /></svg>
      </TaskApp>
      <TaskApp $run aria-label="用戶端">
        <svg width="22" height="22" viewBox="0 0 22 22"><rect width="22" height="22" fill="#4b78ba" /><path d="M0 0h12C5 3 3 10 5 22H0z" fill="#e9f1fa" /><path d="M22 13c-8 3-11-2-9-6 2-3 6-2 9 0V2C15-2 7 2 7 8c0 7 8 11 15 7z" fill="#fff" /><path d="M3 8 9 1M2 17c1-4 2-7 4-9" stroke="#4b78ba" strokeWidth="2" /></svg>
      </TaskApp>
      <TaskApp $run aria-label="遠端">
        <svg width="24" height="24" viewBox="0 0 24 24"><rect x="11" y="1" width="12" height="11" fill="#35894a" stroke="#6f8f80" /><path d="M14 14h8" stroke="#888" strokeWidth="2" /><rect x="1" y="9" width="14" height="10" fill="#6e9fdc" stroke="#dbe4ec" strokeWidth="1.500" /><path d="M6 20h4v2h3v1.500H3V22h3z" fill="#dbe4ec" /><path d="M3 5h4V2l3 3-3 3V7" fill="#cf6b24" /><path d="M17 20l4-2v5" fill="none" stroke="#a31c35" strokeWidth="2.500" /></svg>
      </TaskApp>
      <TaskApp $on aria-label="伺服端"><Mushroom size={24} /></TaskApp>
    </Apps>
    <Tray>
      <TrayBtn aria-label="顯示隱藏圖示"><svg width="12" height="7" viewBox="0 0 12 7"><path d="M.5 6.500 6 1l5.500 5.500" fill="none" stroke="#fff" strokeWidth="1.300" /></svg></TrayBtn>
      <TrayBtn aria-label="Avira">
        <svg width="16" height="16" viewBox="0 0 16 16"><rect width="16" height="16" fill="#e01119" /><path d="M2.500 9.500C3 4 8.500 1.500 13 5c-3.500-.8-7 .5-10.500 4.500zM9 5l2.500 6.500 2.500.5M7.500 6.500C8.500 10 7 12 4 12.500" fill="none" stroke="#fff" strokeWidth="1.500" /></svg>
      </TrayBtn>
      <TrayBtn aria-label="網路"><svg width="17" height="14" viewBox="0 0 17 14"><path d="M4.500 2.500h12v8h-12zM10.500 10.500v3M7 13.500h7M.5.5h3.500v4h-3.500zM2.500 4.500v7h2" fill="none" stroke="#fff" /></svg></TrayBtn>
      <TrayBtn aria-label="音量"><svg width="17" height="14" viewBox="0 0 17 14"><path d="M.5 4.500H3l3.500-3.500v12L3 9.500H.5zM8.500 5q1.500 2 0 4M10.500 3q3.500 4 0 8" fill="none" stroke="#fff" /><path d="M13 1q5 6 0 12" fill="none" stroke="#888" /></svg></TrayBtn>
      <TrayBtn>中</TrayBtn>
      <Clock>上午 12:27<br />2017/3/5</Clock>
      <Action aria-label="重要訊息中心 1">
        <svg width="26" height="26" viewBox="0 0 26 26">
          <path d="M1 2h16v12H8l-3 3v-3H1z" fill="#fff" /><path d="M4 5.500h10M4 8.500h10M4 11.500h6" stroke="#111" />
          <circle cx="17" cy="17.500" r="7.500" fill="#2f3234" stroke="#85888a" />
          <text x="17" y="22" textAnchor="middle" fontSize="12" fontFamily="Open Sans" fill="#fff">1</text>
        </svg>
      </Action>
      <Edge />
    </Tray>
  </Taskbar>
);

export default function App() {
  return (
    <Desktop>
      <Global />
      <ExplorerWindow />
      <TaskbarView />
      <ServerWindow />
    </Desktop>
  );
}
